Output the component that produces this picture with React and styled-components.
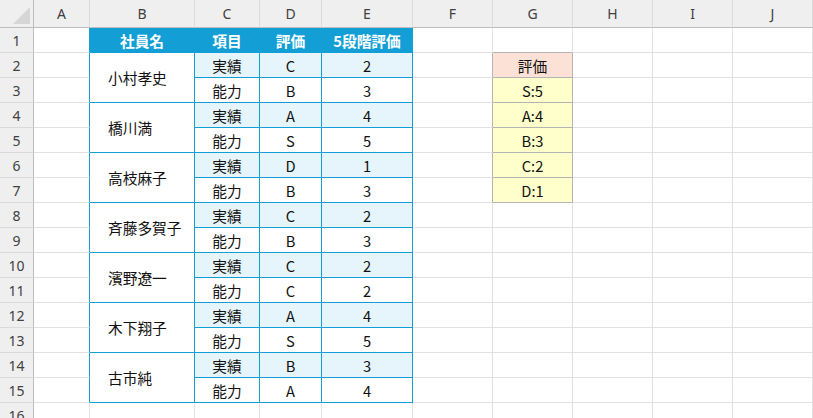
import styled, { createGlobalStyle } from "styled-components";

const GlobalStyle = createGlobalStyle`
  html, body {
    margin: 0;
    padding: 0;
    background: #ffffff;
    overflow: hidden;
  }
`;

const BLUE = "#139fd6";
const PALE = "#e6f5fc";
const GRID = "#e1e1e1";
const NOTE = "#b4b4b4";

const COLS = ["A", "B", "C", "D", "E", "F", "G", "H", "I", "J"];

const Sheet = styled.div`
  display: grid;
  grid-template-columns: 34px 56px 105px 65px 62px 91px repeat(5, 80px);
  grid-template-rows: 28px repeat(16, 25px);
  width: 813px;
  height: 418px;
  overflow: hidden;
  font-family: "Noto Sans CJK JP", "Noto Sans", sans-serif;
`;

const Corner = styled.div`
  position: relative;
  background: #efefef;
  border-right: 1px solid #bdbdbd;
  border-bottom: 1px solid #bdbdbd;
`;

const Triangle = styled.svg`
  position: absolute;
  right: 3px;
  bottom: 3px;
`;

const ColHead = styled.div`
  display: flex;
  align-items: center;
  justify-content: center;
  background: #efefef;
  border-right: 1px solid #dadada;
  border-bottom: 1px solid #bdbdbd;
  color: #404040;
  font-family: "Noto Sans", "Liberation Sans", sans-serif;
  font-size: 14px;
`;

const RowHead = styled.div`
  display: flex;
  align-items: center;
  justify-content: center;
  background: #efefef;
  border-right: 1px solid #bdbdbd;
  border-bottom: 1px solid #dadada;
  color: #404040;
  font-family: "Noto Sans", "Liberation Sans", sans-serif;
  font-size: 14px;
`;

const Cell = styled.div`
  display: flex;
  align-items: center;
  justify-content: ${(p) => (p.$left ? "flex-start" : "center")};
  padding-left: ${(p) => (p.$left ? "18px" : "0")};
  grid-row: ${(p) => (p.$span ? `span ${p.$span}` : "auto")};
  background: ${(p) => p.$bg || "#ffffff"};
  border-right: 1px solid ${(p) => p.$right || GRID};
  border-bottom: 1px solid ${(p) => p.$bottom || GRID};
  color: ${(p) => (p.$head ? "#ffffff" : "#111111")};
  font-weight: ${(p) => (p.$head ? 700 : 400)};
  font-size: 14.7px;
  white-space: nowrap;
`;

const people = [
  { name: "小村孝史", rows: [["C", 2], ["B", 3]] },
  { name: "橋川満", rows: [["A", 4], ["S", 5]] },
  { name: "高枝麻子", rows: [["D", 1], ["B", 3]] },
  { name: "斉藤多賀子", rows: [["C", 2], ["B", 3]] },
  { name: "濱野遼一", rows: [["C", 2], ["C", 2]] },
  { name: "木下翔子", rows: [["A", 4], ["S", 5]] },
  { name: "古市純", rows: [["B", 3], ["A", 4]] },
];

const scale = ["評価", "S:5", "A:4", "B:3", "C:2", "D:1"];

function Blank({ n, right, bottom }) {
  return Array.from({ length: n }, (_, i) => (
    <Cell key={i} $right={right} $bottom={bottom} />
  ));
}

function Side({ row }) {
  // F..J for a given sheet row
  const idx = row - 2;
  const inScale = idx >= 0 && idx < scale.length;
  return (
    <>
      <Cell $right={inScale ? NOTE : undefined} />
      {inScale ? (
        <Cell $bg={idx === 0 ? "#fce2d6" : "#ffffcc"} $right={NOTE} $bottom={NOTE}>
          {scale[idx]}
        </Cell>
      ) : (
        <Cell $bottom={row === 1 ? NOTE : undefined} />
      )}
      <Blank n={3} />
    </>
  );
}

export default function App() {
  const body = [];
  // row 1: table header
  body.push(
    <RowHead key="r1">1</RowHead>,
    <Cell key="a1" $right={BLUE} />,
    <Cell key="b1" $head $bg={BLUE} $right={BLUE} $bottom={BLUE}>社員名</Cell>,
    <Cell key="c1" $head $bg={BLUE} $right={BLUE} $bottom={BLUE}>項目</Cell>,
    <Cell key="d1" $head $bg={BLUE} $right={BLUE} $bottom={BLUE}>評価</Cell>,
    <Cell key="e1" $head $bg={BLUE} $right={BLUE} $bottom={BLUE}>5段階評価</Cell>,
    <Side key="s1" row={1} />
  );

  people.forEach((p, pi) => {
    p.rows.forEach(([grade, score], ri) => {
      const row = 2 + pi * 2 + ri;
      const bg = ri === 0 ? PALE : "#ffffff";
      body.push(
        <RowHead key={`r${row}`}>{row}</RowHead>,
        <Cell key={`a${row}`} $right={BLUE} />
      );
      if (ri === 0) {
        body.push(
          <Cell key={`b${row}`} $span={2} $left $right={BLUE} $bottom={BLUE}>
            {p.name}
          </Cell>
        );
      }
      body.push(
        <Cell key={`c${row}`} $bg={bg} $right={BLUE} $bottom={BLUE}>
          {ri === 0 ? "実績" : "能力"}
        </Cell>,
        <Cell key={`d${row}`} $bg={bg} $right={BLUE} $bottom={BLUE}>{grade}</Cell>,
        <Cell key={`e${row}`} $bg={bg} $right={BLUE} $bottom={BLUE}>{score}</Cell>,
        <Side key={`s${row}`} row={row} />
      );
    });
  });

  body.push(<RowHead key="r16">16</RowHead>, <Blank key="b16" n={10} />);

  return (
    <>
      <GlobalStyle />
      <Sheet>
        <Corner>
          <Triangle width="17" height="17" viewBox="0 0 17 17">
            <polygon points="0,17 17,17 17,0" fill="#d6d6d6" />
          </Triangle>
        </Corner>
        {COLS.map((c) => (
          <ColHead key={c}>{c}</ColHead>
        ))}
        {body}
      </Sheet>
    </>
  );
}
